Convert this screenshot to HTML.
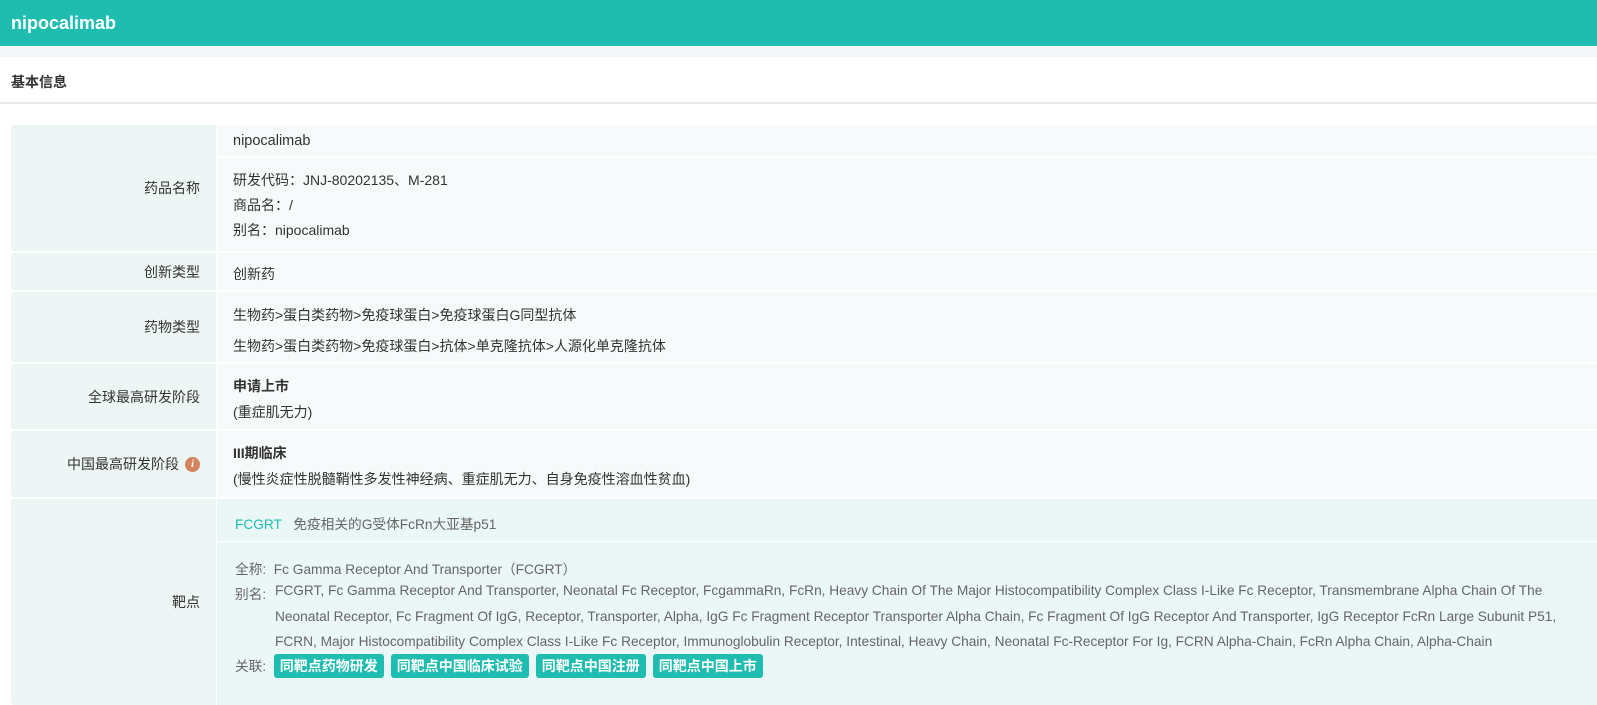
<!DOCTYPE html>
<html><head><meta charset="utf-8"><style>
*{margin:0;padding:0;box-sizing:border-box}
body{width:1597px;height:705px;overflow:hidden;background:#fff;font-family:"Liberation Sans","Noto Sans CJK SC",sans-serif;color:#333;font-size:14px;position:relative}
.a{position:absolute;white-space:nowrap}
.hd{left:0;top:0;width:1597px;height:46px;background:#1fbcb0;color:#fff;font-weight:bold;font-size:18px;line-height:46px;padding-left:11px}
.gap{left:0;top:46px;width:1597px;height:11px;background:#f4f6f8}
.sec{left:0;top:102px;width:1597px;height:2px;background:#e8e8e8}
.lab{left:11px;width:205px;background:#eef5f5;text-align:right;padding-right:16px;display:flex;align-items:center;justify-content:flex-end;font-size:14px;border-radius:3px 0 0 3px}
.cnt{left:217px;width:1380px;background:#f7fafa}
.t{color:#333;font-size:14px}
.g{color:#666;font-size:13.7px}
.btn{display:inline-block;background:#1fbcb0;color:#fff;font-weight:bold;font-size:14px;padding:0 6px;height:24px;line-height:24px;border-radius:3px;margin-right:7px}
</style></head><body>
<div class="a hd">nipocalimab</div>
<div class="a gap"></div>
<div class="a" style="left:11px;top:72px;font-weight:bold;font-size:14px">基本信息</div>
<div class="a sec"></div>

<div class="a lab" style="top:125px;height:126px">药品名称</div>
<div class="a cnt" style="top:125px;height:31px"></div>
<div class="a cnt" style="top:158px;height:93px"></div>
<div class="a t" style="left:233px;top:133px;font-size:14.5px">nipocalimab</div>
<div class="a t" style="left:233px;top:170px">研发代码：JNJ-80202135、M-281</div>
<div class="a t" style="left:233px;top:195px">商品名：/</div>
<div class="a t" style="left:233px;top:220px">别名：nipocalimab</div>

<div class="a lab" style="top:253px;height:37px">创新类型</div>
<div class="a cnt" style="top:253px;height:37px"></div>
<div class="a t" style="left:233px;top:264px">创新药</div>

<div class="a lab" style="top:292px;height:70px">药物类型</div>
<div class="a cnt" style="top:292px;height:70px"></div>
<div class="a t" style="left:233px;top:305px">生物药&gt;蛋白类药物&gt;免疫球蛋白&gt;免疫球蛋白G同型抗体</div>
<div class="a t" style="left:233px;top:336px">生物药&gt;蛋白类药物&gt;免疫球蛋白&gt;抗体&gt;单克隆抗体&gt;人源化单克隆抗体</div>

<div class="a lab" style="top:364px;height:65px">全球最高研发阶段</div>
<div class="a cnt" style="top:364px;height:65px"></div>
<div class="a t" style="left:233px;top:376px;font-weight:bold">申请上市</div>
<div class="a t" style="left:233px;top:402px">(重症肌无力)</div>

<div class="a lab" style="top:431px;height:66px">中国最高研发阶段<span style="display:inline-block;width:15px;height:15px;border-radius:50%;background:#d4845c;color:#fff;font-size:11px;font-style:italic;font-weight:bold;text-align:center;line-height:15px;margin-left:6px;font-family:'Liberation Serif',serif">i</span></div>
<div class="a cnt" style="top:431px;height:66px"></div>
<div class="a t" style="left:233px;top:443px;font-weight:bold">III期临床</div>
<div class="a t" style="left:233px;top:469px">(慢性炎症性脱髓鞘性多发性神经病、重症肌无力、自身免疫性溶血性贫血)</div>

<div class="a lab" style="top:499px;height:206px">靶点</div>
<div class="a cnt" style="top:499px;height:42px;background:#ebf7f6"></div>
<div class="a cnt" style="top:542px;height:163px;background:#ebf7f6"></div>
<div class="a g" style="left:235px;top:513px"><span style="color:#1fbcb0">FCGRT</span>&nbsp;&nbsp;&nbsp;免疫相关的G受体FcRn大亚基p51</div>
<div class="a g" style="left:235px;top:558px">全称:&nbsp;&nbsp;Fc Gamma Receptor And Transporter（FCGRT）</div>
<div class="a g" style="left:235px;top:583px">别名:</div>
<div class="a g" style="left:275px;top:583px">FCGRT, Fc Gamma Receptor And Transporter, Neonatal Fc Receptor, FcgammaRn, FcRn, Heavy Chain Of The Major Histocompatibility Complex Class I-Like Fc Receptor, Transmembrane Alpha Chain Of The</div>
<div class="a g" style="left:275px;top:609px">Neonatal Receptor, Fc Fragment Of IgG, Receptor, Transporter, Alpha, IgG Fc Fragment Receptor Transporter Alpha Chain, Fc Fragment Of IgG Receptor And Transporter, IgG Receptor FcRn Large Subunit P51,</div>
<div class="a g" style="left:275px;top:634px">FCRN, Major Histocompatibility Complex Class I-Like Fc Receptor, Immunoglobulin Receptor, Intestinal, Heavy Chain, Neonatal Fc-Receptor For Ig, FCRN Alpha-Chain, FcRn Alpha Chain, Alpha-Chain</div>
<div class="a g" style="left:235px;top:654px;line-height:24px">关联:&nbsp;&nbsp;<span class="btn">同靶点药物研发</span><span class="btn">同靶点中国临床试验</span><span class="btn">同靶点中国注册</span><span class="btn">同靶点中国上市</span></div>
</body></html>
